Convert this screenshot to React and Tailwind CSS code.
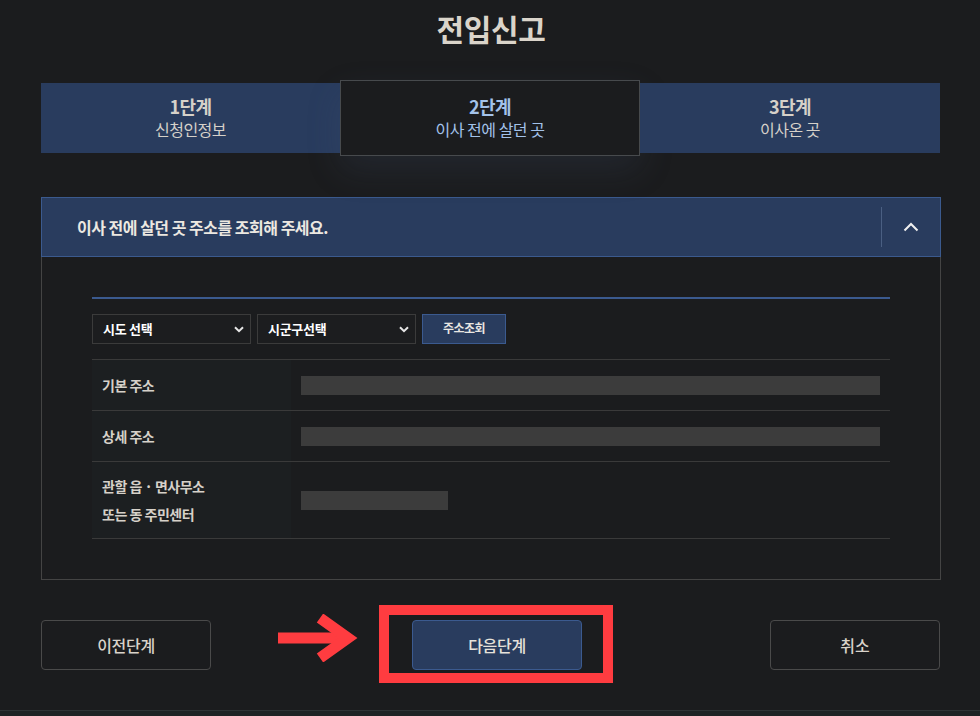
import React from "react";

function ChevDown() {
  return (
    <svg width="10" height="7" viewBox="0 0 10 7" fill="none">
      <polyline points="1,1.2 5,5.2 9,1.2" stroke="#e6e6e6" strokeWidth="2" />
    </svg>
  );
}

function Row({ label, barW, tall }) {
  return (
    <div className={`flex border-b border-[#3a3a3a] ${tall ? "h-[77px]" : "h-[51px]"}`}>
      <div className="w-[199px] bg-[#1c1f21] flex items-center pl-[10px] text-[14px] font-bold tracking-[-0.5px] leading-[28px] text-[#d6d1c9]">
        {label}
      </div>
      <div className="flex-1 flex items-center px-[10px]">
        <div className={`h-[19px] bg-[#3c3c3c] ${barW}`} />
      </div>
    </div>
  );
}

export default function App() {
  return (
    <div className="h-[716px] overflow-hidden bg-[#1b1c1e] flex flex-col font-['Noto_Sans_CJK_KR','Noto_Sans',sans-serif]">
      <div className="pl-[41px] pr-[39px] pt-[8px]">
        <h1 className="text-center text-[30px] leading-[40px] font-bold text-[#dad4ca] tracking-[-0.3px]">전입신고</h1>

        {/* Tabs */}
        <div className="mt-[32px] flex items-center h-[76px]">
          <div className="w-[299px] h-[70px] bg-[#293c5e] flex flex-col items-center justify-center text-[#d6d1c9]">
            <div className="text-[18px] font-bold leading-[23px] tracking-[-0.5px]">1단계</div>
            <div className="text-[16px] leading-[23px] tracking-[-0.5px]">신청인정보</div>
          </div>
          <div className="w-[300px] h-[76px] border border-[#474a4d] bg-[#1b1c1e] flex flex-col items-center justify-center text-[#a3c2ea] shadow-[0_14px_34px_rgba(70,90,120,0.18)]">
            <div className="text-[18px] font-bold leading-[23px] tracking-[-0.5px]">2단계</div>
            <div className="text-[16px] leading-[23px] tracking-[-0.5px]">이사 전에 살던 곳</div>
          </div>
          <div className="w-[300px] h-[70px] bg-[#293c5e] flex flex-col items-center justify-center text-[#d6d1c9]">
            <div className="text-[18px] font-bold leading-[23px] tracking-[-0.5px]">3단계</div>
            <div className="text-[16px] leading-[23px] tracking-[-0.5px]">이사온 곳</div>
          </div>
        </div>

        {/* Panel */}
        <div className="mt-[41px]">
          <div className="h-[60px] bg-[#293c5e] border border-[#3b5a8e] flex items-center">
            <div className="flex-1 pl-[35px] text-[16px] font-bold tracking-[-0.5px] text-[#ece8e1]">
              이사 전에 살던 곳 주소를 조회해 주세요.
            </div>
            <div className="w-px h-[40px] bg-[#4a5f82]" />
            <div className="w-[58px] flex items-center justify-center">
              <svg width="16" height="10" viewBox="0 0 16 10" fill="none">
                <polyline points="1.5,8.5 8,2 14.5,8.5" stroke="#f0f0f0" strokeWidth="2" />
              </svg>
            </div>
          </div>
          <div className="border-x border-b border-[#444444] px-[50px] pt-[40px] pb-[40px]">
            <div className="h-[2px] bg-[#3b5a8f]" />
            <div className="mt-[15px] flex gap-[6px] h-[30px]">
              <div className="w-[159px] border border-[#3b3b3b] bg-[#1c1d1f] flex items-center justify-between pl-[10px] pr-[6px] text-[13px] font-bold text-white tracking-[-0.3px]">
                <span>시도 선택</span>
                <ChevDown />
              </div>
              <div className="w-[159px] border border-[#3b3b3b] bg-[#1c1d1f] flex items-center justify-between pl-[10px] pr-[6px] text-[13px] font-bold text-white tracking-[-0.3px]">
                <span>시군구선택</span>
                <ChevDown />
              </div>
              <div className="w-[84px] border border-[#3b5a8f] bg-[#293c5e] flex items-center justify-center pb-[3px] text-[12px] font-bold text-[#e8e6e2] tracking-[-0.5px]">
                주소조회
              </div>
            </div>
            <div className="mt-[15px] border-t border-[#3a3a3a] w-[798px]">
              <Row label="기본 주소" barW="w-[579px]" />
              <Row label="상세 주소" barW="w-[579px]" />
              <Row
                label={
                  <div>
                    <div>관할 읍 · 면사무소</div>
                    <div>또는 동 주민센터</div>
                  </div>
                }
                barW="w-[147px]"
                tall
              />
            </div>
          </div>
        </div>

        {/* Buttons */}
        <div className="mt-[40px] flex items-center h-[50px]">
          <div className="w-[170px] h-[50px] rounded-[4px] border border-[#4a4a4a] flex items-center justify-center text-[16px] font-medium text-[#d9d3ca] tracking-[-0.3px]">
            이전단계
          </div>
          <div className="relative ml-[201px] w-[170px] h-[50px]">
            <div className="w-full h-full rounded-[4px] border border-[#3b5a8f] bg-[#293c5e] flex items-center justify-center text-[16px] font-medium text-[#e6e2db] tracking-[-0.3px]">
              다음단계
            </div>
            <div className="absolute left-[-33px] top-[-15px] w-[234px] h-[78px] border-[10px] border-[#ff3c40]" />
            <svg className="absolute left-[-134px] top-[-6px]" width="82" height="48" viewBox="0 0 82 48" fill="none">
              <rect x="0" y="18.5" width="62" height="11" fill="#ff3c40" />
              <polyline points="42,4 70,24 42,44" stroke="#ff3c40" strokeWidth="11" strokeLinejoin="miter" strokeMiterlimit="4" />
            </svg>
          </div>
          <div className="ml-auto mr-px w-[170px] h-[50px] rounded-[4px] border border-[#4a4a4a] flex items-center justify-center text-[16px] font-medium text-[#d9d3ca]">
            취소
          </div>
        </div>
      </div>
      <div className="mt-[40px] flex-1 border-t border-[#2f3335] bg-[#1e2224]" />
    </div>
  );
}
